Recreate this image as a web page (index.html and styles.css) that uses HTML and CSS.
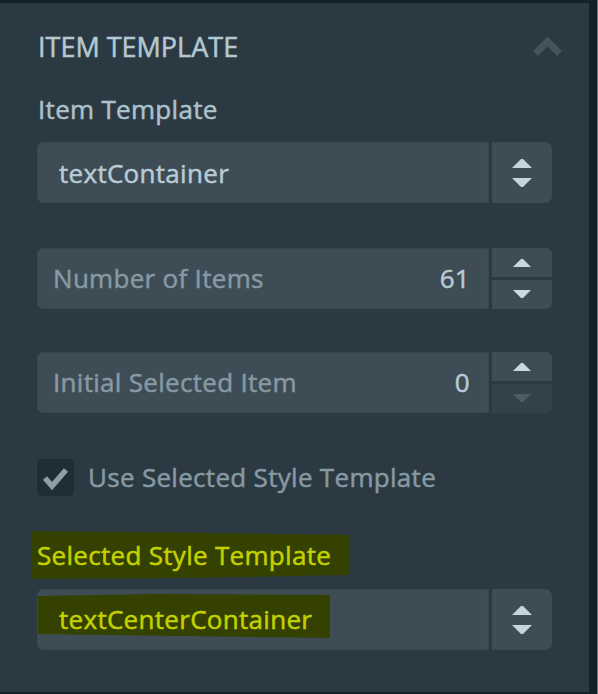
FILE: index.html
```html
<!DOCTYPE html>
<html>
<head>
<meta charset="utf-8">
<link rel="stylesheet" href="styles.css">
</head>
<body>
<div class="frame">
  <section class="panel">
    <div class="header">
      <h2 class="title">ITEM TEMPLATE</h2>
      <svg class="chevron" width="29" height="20" viewBox="0 0 29 20"><polyline points="2.5,17.5 14.5,5.5 26.5,17.5" fill="none" stroke="#43545d" stroke-width="7" stroke-linejoin="miter"/></svg>
    </div>

    <div class="label">Item Template</div>
    <div class="select">
      <div class="select-main"><span class="select-text">textContainer</span></div>
      <div class="select-btn">
        <svg width="20" height="30" viewBox="0 0 20 30"><polygon points="0,10 9,1 11,1 20,10" fill="#c3d4dc"/><polygon points="0,20 20,20 11,29 9,29" fill="#c3d4dc"/></svg>
      </div>
    </div>

    <div class="num num-first">
      <div class="num-main"><span class="num-label">Number of Items</span><span class="num-value">61</span></div>
      <div class="spin">
        <div class="spin-btn spin-up"><svg width="18" height="9" viewBox="0 0 18 9"><polygon points="0,9 8,1 10,1 18,9" fill="#c8d8e0"/></svg></div>
        <div class="spin-btn spin-down"><svg width="18" height="9" viewBox="0 0 18 9"><polygon points="0,0 18,0 10,8 8,8" fill="#c8d8e0"/></svg></div>
      </div>
    </div>

    <div class="num num-second">
      <div class="num-main"><span class="num-label">Initial Selected Item</span><span class="num-value">0</span></div>
      <div class="spin">
        <div class="spin-btn spin-up"><svg width="18" height="9" viewBox="0 0 18 9"><polygon points="0,9 8,1 10,1 18,9" fill="#c8d8e0"/></svg></div>
        <div class="spin-btn spin-down disabled"><svg width="18" height="9" viewBox="0 0 18 9"><polygon points="0,0 18,0 10,8 8,8" fill="#4c5c64"/></svg></div>
      </div>
    </div>

    <div class="check-row">
      <div class="checkbox"><svg width="37" height="37" viewBox="0 0 37 37"><polyline points="8,19 15,27 29,11" fill="none" stroke="#8c9fa9" stroke-width="5.5" stroke-linejoin="miter" stroke-linecap="butt"/></svg></div>
      <span class="check-label">Use Selected Style Template</span>
    </div>

    <div class="label-hl"><span class="hl hl-label">Selected Style Template</span></div>
    <div class="select select-second">
      <div class="select-main select-main-hl"><span class="hl hl-select">textCenterContainer</span></div>
      <div class="select-btn">
        <svg width="20" height="30" viewBox="0 0 20 30"><polygon points="0,10 9,1 11,1 20,10" fill="#c3d4dc"/><polygon points="0,20 20,20 11,29 9,29" fill="#c3d4dc"/></svg>
      </div>
    </div>
  </section>
</div>
</body>
</html>
```

FILE: styles.css
```css
html, body {
  margin: 0;
  padding: 0;
}
body {
  background: #10222a;
  width: 598px;
  height: 694px;
  overflow: hidden;
  font-family: "Open Sans", "Noto Sans", sans-serif;
  -webkit-text-stroke: 0.5px currentColor;
  letter-spacing: 0.3px;
}
.frame {
  padding-top: 3px;
  width: 597px;
  height: 691px;
  border-right: 1px solid #6b7a82;
}
.panel {
  width: 589px;
  height: 689px;
  background: #2b3a42;
  box-sizing: border-box;
  padding: 26px 0 0 37px;
  display: flex;
  flex-direction: column;
  align-items: flex-start;
}
.header {
  width: 525px;
  display: flex;
  justify-content: space-between;
  align-items: flex-start;
}
.title {
  margin: 0 0 0 1px;
  font-size: 27px;
  line-height: 36px;
  font-weight: 400;
  letter-spacing: 0;
  color: #b4c8d2;
}
.chevron {
  display: block;
  margin-top: 7px;
}
.label {
  margin-top: 27px;
  margin-left: 1px;
  font-size: 26px;
  line-height: 34px;
  color: #adc1cc;
}
.select {
  margin-top: 16px;
  width: 515px;
  height: 61px;
  display: grid;
  grid-template-columns: 1fr 60px;
  column-gap: 3px;
}
.select-main {
  background: #3e4d55;
  border-radius: 7px 0 0 7px;
  box-shadow: inset 0 0 0 1px #38474f, inset 0 0 0 2px #3f4e56;
  padding: 2px 0 0 22px;
  font-size: 26px;
  line-height: 59px;
  color: #b8cbd5;
}
.select-btn {
  background: #3e4d55;
  border-radius: 0 7px 7px 0;
  display: flex;
  align-items: center;
  justify-content: center;
}
.select-btn svg {
  display: block;
  margin-top: 1px;
}
.num {
  width: 515px;
  height: 61px;
  display: grid;
  grid-template-columns: 1fr 60px;
  column-gap: 3px;
}
.num-first {
  margin-top: 45px;
}
.num-second {
  margin-top: 43px;
}
.num-main {
  background: #3e4d55;
  border-radius: 7px 0 0 7px;
  box-shadow: inset 0 0 0 1px #38474f, inset 0 0 0 2px #3f4e56;
  display: flex;
  justify-content: space-between;
  padding: 0 19px 0 16px;
  font-size: 26px;
  line-height: 61px;
}
.num-label {
  color: #8799a3;
}
.num-value {
  color: #b8cbd5;
}
.spin {
  display: grid;
  grid-template-rows: 29px 29px;
  row-gap: 3px;
}
.spin-btn {
  background: #3e4d55;
  display: flex;
  align-items: center;
  justify-content: center;
}
.spin-btn svg {
  display: block;
}
.spin-up {
  border-radius: 0 6px 0 0;
}
.spin-down {
  border-radius: 0 0 6px 0;
}
.spin-btn.disabled {
  background: #33424a;
}
.check-row {
  margin-top: 46px;
  display: flex;
  align-items: center;
  height: 37px;
}
.checkbox {
  width: 37px;
  height: 37px;
  background: #1f2d34;
  border-radius: 5px;
}
.checkbox svg {
  display: block;
}
.check-label {
  margin-left: 14px;
  font-size: 26px;
  line-height: 37px;
  color: #8799a3;
}
.label-hl {
  margin-top: 35px;
  margin-left: -6px;
  height: 48px;
}
.hl {
  display: inline-block;
  background: #344100;
  color: #c3d100;
  font-size: 26px;
}
.hl-label {
  height: 48px;
  line-height: 48px;
  padding: 0 18px 0 6px;
  clip-path: polygon(0 0, 60% 2px, 100% 4px, 100% 44px, 50% 47px, 0 48px);
}
.select-second {
  margin-top: 10px;
}
.select-main-hl {
  padding: 5px 0 0 1px;
  line-height: normal;
}
.hl-select {
  height: 44px;
  box-sizing: border-box;
  padding: 6px 18px 0 21px;
  line-height: 38px;
  clip-path: polygon(0 2px, 40% 0, 100% 1px, 100% 44px, 50% 42px, 0 40px);
}
```
